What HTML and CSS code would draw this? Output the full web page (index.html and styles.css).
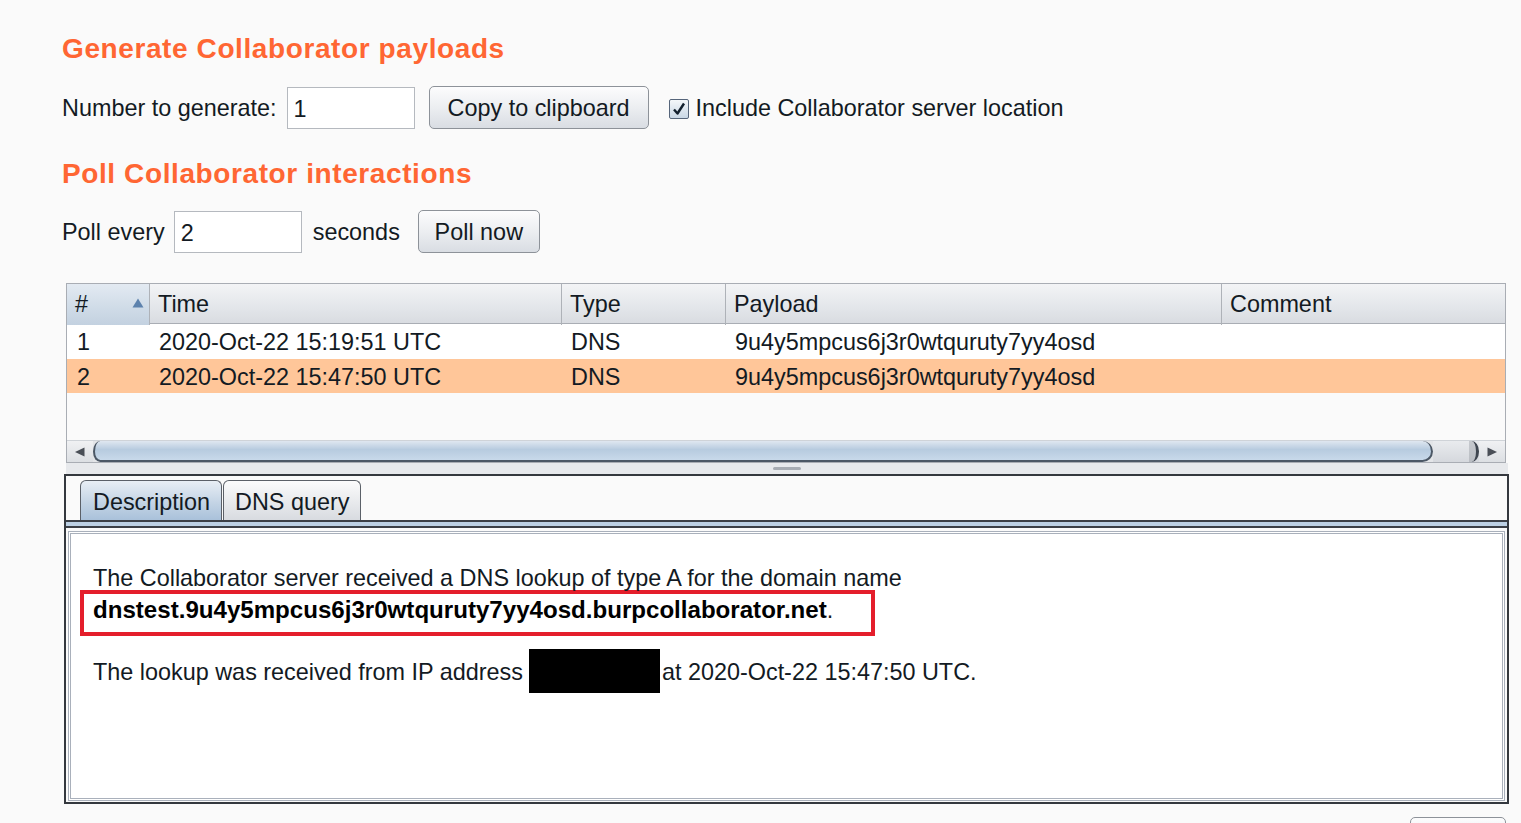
FILE: index.html
```html
<!DOCTYPE html>
<html>
<head>
<meta charset="utf-8">
<title>Collaborator client</title>
<link rel="stylesheet" href="styles.css">
</head>
<body>
<div class="page">
  <h2 class="section-title">Generate Collaborator payloads</h2>
  <div class="controls row1">
    <span class="lbl">Number to generate:</span>
    <div class="field w-num">1</div>
    <button class="btn btn-copy">Copy to clipboard</button>
    <label class="check">
      <span class="box"><svg width="18" height="18" viewBox="0 0 18 18"><path d="M4 9.5 L7.5 13.5 L14 3.5" fill="none" stroke="#13202e" stroke-width="2.4" stroke-linejoin="round"/></svg></span>
      Include Collaborator server location
    </label>
  </div>

  <h2 class="section-title t2">Poll Collaborator interactions</h2>
  <div class="controls row2">
    <span class="lbl">Poll every</span>
    <div class="field w-poll">2</div>
    <span class="lbl secs">seconds</span>
    <button class="btn btn-poll">Poll now</button>
  </div>

  <div class="table">
    <div class="thead">
      <div class="th c-num sorted">#<span class="sort-arrow"><svg width="12" height="10" viewBox="0 0 12 10"><path d="M6 0.5 L11.5 9.5 L0.5 9.5 Z" fill="#5d82ad"/></svg></span></div>
      <div class="th">Time</div>
      <div class="th">Type</div>
      <div class="th">Payload</div>
      <div class="th last">Comment</div>
    </div>
    <div class="tbody">
      <div class="tr">
        <div class="td c-num">1</div>
        <div class="td">2020-Oct-22 15:19:51 UTC</div>
        <div class="td">DNS</div>
        <div class="td">9u4y5mpcus6j3r0wtquruty7yy4osd</div>
        <div class="td"></div>
      </div>
      <div class="tr sel">
        <div class="td c-num">2</div>
        <div class="td">2020-Oct-22 15:47:50 UTC</div>
        <div class="td">DNS</div>
        <div class="td">9u4y5mpcus6j3r0wtquruty7yy4osd</div>
        <div class="td"></div>
      </div>
    </div>
    <div class="hscroll">
      <div class="sb-btn sb-left"><svg width="12" height="10" viewBox="0 0 12 10"><path d="M10.5 0.5 L1 5 L10.5 9.5 Z" fill="#4a4f57"/></svg></div>
      <div class="sb-thumb"></div>
      <div class="sb-track"><span class="sb-cap"></span></div>
      <div class="sb-btn sb-right"><svg width="12" height="10" viewBox="0 0 12 10"><path d="M1.5 0.5 L11 5 L1.5 9.5 Z" fill="#4a4f57"/></svg></div>
    </div>
  </div>

  <div class="splitter"><span class="grip"></span></div>

  <div class="detail">
    <div class="tabs">
      <div class="tab active">Description</div>
      <div class="tab">DNS query</div>
    </div>
    <div class="tabline"></div>
    <div class="content">
      <p class="line1">The Collaborator server received a DNS lookup of type A for the domain name</p>
      <div class="highlight"><b>dnstest.9u4y5mpcus6j3r0wtquruty7yy4osd.burpcollaborator.net</b>.</div>
      <div class="line3"><span>The lookup was received from IP address</span><span class="redact"></span><span>at 2020-Oct-22 15:47:50 UTC.</span></div>
    </div>
  </div>

  <div class="footer"><button class="btn btn-small"></button></div>
</div>
</body>
</html>
```

FILE: styles.css
```css
* { box-sizing: border-box; }
html, body { margin: 0; padding: 0; }
body {
  background: #fafafa;
  font-family: "Liberation Sans", Arial, sans-serif;
  font-size: 23.4px;
  color: #131a23;
  width: 1521px;
  height: 823px;
  overflow: hidden;
}
.page { padding: 31px 0 0 62px; }

.section-title {
  margin: 0;
  font-size: 28px;
  line-height: 36px;
  font-weight: bold;
  color: #ff6633;
  letter-spacing: 0.6px;
}
.t2 { margin-top: 27px; }

.controls { display: flex; align-items: center; height: 43px; }
.row1 { margin-top: 19px; }
.row2 { margin-top: 18px; }
.lbl { position: relative; top: 1px; }

.field {
  height: 42px;
  background: #fff;
  border: 1px solid #b5b9bf;
  padding-left: 6px;
  line-height: 42px;
}
.w-num { width: 128px; margin-left: 10px; }
.w-poll { width: 128px; margin-left: 9px; }
.secs { margin-left: 11px; }

.btn {
  font: inherit;
  color: inherit;
  height: 43px;
  border: 1px solid #8d9299;
  border-radius: 5px;
  background: linear-gradient(#fcfcfd, #eceef1 50%, #d9dde3);
  padding: 2px 0 0;
  text-align: center;
}
.btn-copy { margin-left: 14px; width: 220px; }
.btn-poll { margin-left: 18px; width: 122px; }

.check { display: flex; align-items: center; margin-left: 20px; position: relative; top: 1px; }
.box {
  width: 20px;
  height: 20px;
  border: 1px solid #56657a;
  border-radius: 2px;
  background: linear-gradient(#f4f7fa, #c9d7e5);
  margin-right: 7px;
  display: flex;
  align-items: center;
  justify-content: center;
}

/* table */
.table {
  margin-top: 30px;
  margin-left: 4px;
  width: 1440px;
  border: 1px solid #a9adb4;
  background: #fff;
}
.thead, .tr {
  display: grid;
  grid-template-columns: 83px 412px 164px 496px 1fr;
}
.thead {
  height: 40px;
  border-bottom: 1px solid #a9adb4;
  background: linear-gradient(#f3f4f6, #e3e6ea 60%, #d9dce1);
}
.th {
  line-height: 41px;
  padding-left: 8px;
  border-right: 1px solid #aeb2b8;
  position: relative;
}
.th.last { border-right: none; }
.th.sorted {
  background: linear-gradient(#e3eaf2, #cfdbe7 60%, #c3d1e0);
}
.sort-arrow {
  position: absolute;
  right: 5px;
  top: 14px;
  display: flex;
}
.tbody { height: 116px; background: #fafafa; }
.tr { height: 35px; background: #fff; line-height: 37px; }
.tr.sel { background: #ffc699; height: 34px; line-height: 36px; }
.td { padding-left: 9px; white-space: nowrap; }
.td.c-num { padding-left: 10px; }

.hscroll {
  display: flex;
  height: 22px;
  background: #e3e5e8;
  border-top: 1px solid #cfd3d8;
}
.sb-btn {
  width: 26px;
  display: flex;
  align-items: center;
  justify-content: center;
  background: linear-gradient(#f0f1f3, #dcdfe3);
}
.sb-right { width: 26px; }
.sb-thumb {
  flex: 1;
  background: linear-gradient(#dfe7f0, #b7cbdf 45%, #c8d9ea);
  border-bottom: 2px solid #4c5866;
  border-left: 2px solid #4c5866;
  border-right: 2px solid #4c5866;
  border-radius: 14px 20px 20px 14px / 20px 20px 20px 20px;
}
.sb-track {
  width: 46px;
  background: linear-gradient(#e9ebee, #d5d8dd);
  display: flex;
  justify-content: flex-end;
}
.sb-cap {
  display: block;
  width: 10px;
  height: 100%;
  background: linear-gradient(#c6c9ce, #b9bdc3);
  border-right: 3px solid #3f4650;
  border-radius: 0 14px 14px 0 / 0 20px 20px 0;
}

.splitter {
  margin-left: 4px;
  width: 1442px;
  height: 11px;
  background: #e7e9ec;
  display: flex;
  justify-content: center;
  align-items: center;
}
.grip {
  display: block;
  width: 28px;
  height: 3px;
  border-radius: 2px;
  background: #a7acb3;
}

/* detail panel */
.detail {
  margin-left: 2px;
  width: 1445px;
  height: 330px;
  border: 2px solid #34383e;
  background: #fafafa;
  display: flex;
  flex-direction: column;
}
.tabs {
  display: flex;
  padding: 4px 0 0 14px;
  height: 44px;
}
.tab {
  height: 40px;
  line-height: 42px;
  padding: 0 12px;
  white-space: nowrap;
  border: 1px solid #5b6068;
  border-bottom: none;
  border-radius: 6px 6px 0 0;
  background: linear-gradient(#fbfbfc, #e6e8eb 60%, #d8dbe0);
  margin-right: 1px;
}
.tab.active {
  width: 142px;
  background: linear-gradient(#e8eef5, #c4d4e5 55%, #a9c1da);
}
.tab:not(.active) { width: 138px; padding: 0 11px; }
.tabline {
  height: 8px;
  border-top: 2px solid #3b3f46;
  border-bottom: 2px solid #3b3f46;
  background: #bcd0e4;
}
.content {
  margin: 3px 2px 1px 2px;
  flex: 1;
  background: #fff;
  border: 3px double #a9b0bb;
  padding: 29px 0 0 22px;
}
.content p { margin: 0; }
.line1 { line-height: 31px; }
.highlight {
  margin-top: -4px;
  margin-left: -13px;
  width: 795px;
  height: 46px;
  border: 4px solid #e41e2b;
  padding-left: 9px;
  line-height: 31px;
}
.highlight b { font-weight: bold; color: #000; font-size: 24.1px; }
.line3 {
  margin-top: 13px;
  display: flex;
  align-items: center;
  height: 44px;
}
.line3 span:not(.redact) { position: relative; top: 1px; }
.redact {
  display: block;
  width: 131px;
  height: 44px;
  background: #000;
  margin: 0 2px 0 6px;
}

.footer { margin-top: 13px; padding-left: 1348px; }
.btn-small { width: 96px; height: 42px; }
```
